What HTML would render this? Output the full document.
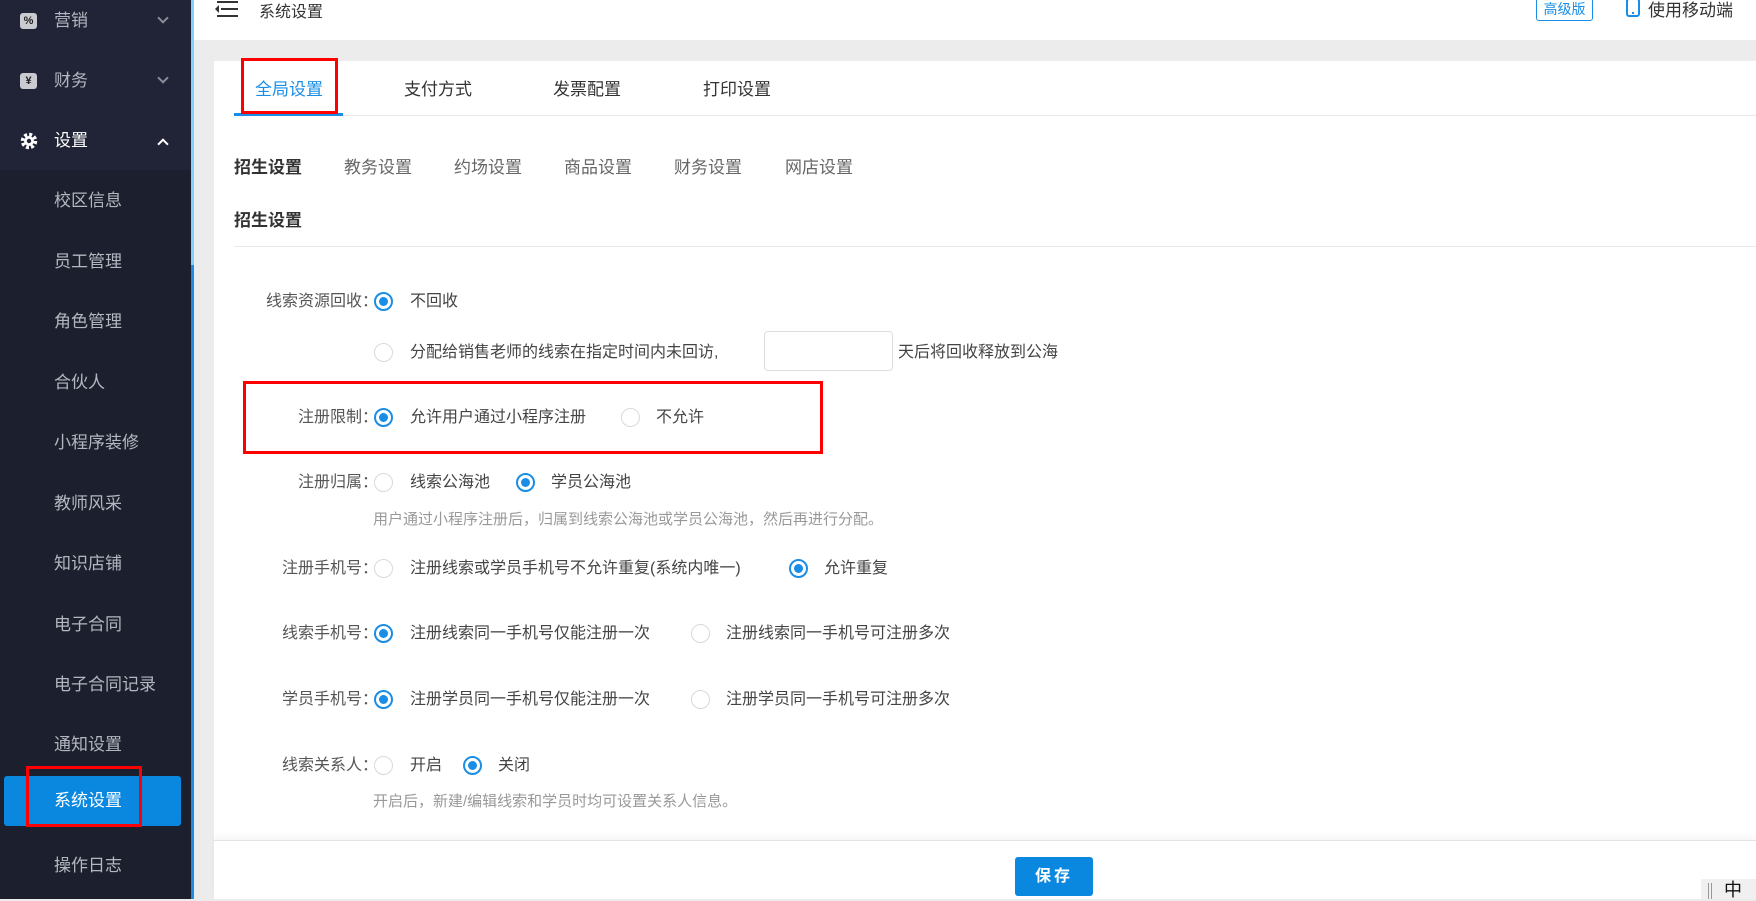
<!DOCTYPE html>
<html><head><meta charset="utf-8">
<style>
*{margin:0;padding:0;box-sizing:border-box}
body{width:1756px;height:899px;overflow:hidden;background:#ececec;font-family:"Liberation Sans","Noto Sans CJK SC",sans-serif;position:relative;color:#333}
.a{position:absolute;white-space:nowrap}
#side{position:absolute;left:0;top:0;width:191px;height:899px;background:#1c1f2d}
#side .hd{position:absolute;left:0;top:0;width:191px;height:170px;background:#212436}
.si{position:absolute;left:54px;font-size:17px;color:#b4b7c0;line-height:20px}
.ic{position:absolute;left:20px;width:17px;height:16px;background:#c9cbd1;border-radius:3px;font-size:11px;color:#222;text-align:center;line-height:16px;font-weight:bold}
.chev{position:absolute;left:159px;width:8px;height:8px;border-right:2px solid #8a8d97;border-bottom:2px solid #8a8d97}
#strip1{position:absolute;left:191px;top:0;width:3px;height:265px;background:#7fd0ff}
#strip2{position:absolute;left:191px;top:265px;width:3px;height:634px;background:#1a8ee6}
#top{position:absolute;left:194px;top:0;width:1562px;height:40px;background:#fff}
#card{position:absolute;left:214px;top:61px;width:1542px;height:779px;background:#fff}
#foot{position:absolute;left:214px;top:840px;width:1542px;height:59px;background:#fff;border-top:1px solid #e3e3e3;box-shadow:0 -4px 6px rgba(0,0,0,0.04)}
.tab{position:absolute;top:78px;font-size:17px;color:#333;line-height:24px}
.st{position:absolute;top:156px;font-size:17px;color:#666;line-height:24px}
.lb{position:absolute;font-size:16px;color:#555;line-height:22px;text-align:right;width:220px;left:158px;white-space:nowrap}
.tx{position:absolute;font-size:16px;color:#444;line-height:22px;white-space:nowrap}
.r{position:absolute;width:19px;height:19px;border:1px solid #d9d9d9;border-radius:50%;background:#fff}
.r.on{border:2px solid #1a8ee6}
.r.on::after{content:"";position:absolute;left:3px;top:3px;width:9px;height:9px;border-radius:50%;background:#1a8ee6}
.hint{position:absolute;left:373px;font-size:15px;color:#999;line-height:18px;white-space:nowrap}
.red{position:absolute;border:3px solid #f00}
</style></head><body>
<div id="side">
 <div class="hd"></div>
 <div class="ic" style="top:13px">%</div><div class="si" style="top:11px">营销</div><div class="chev" style="top:14px;transform:rotate(45deg)"></div>
 <div class="ic" style="top:73px">¥</div><div class="si" style="top:71px">财务</div><div class="chev" style="top:74px;transform:rotate(45deg)"></div>
 <svg class="a" style="left:20px;top:132px" width="18" height="18" viewBox="0 0 18 18"><circle cx="9" cy="9" r="6.5" fill="none" stroke="#fff" stroke-width="3.5" stroke-dasharray="3 2.1"/><circle cx="9" cy="9" r="5" fill="#fff"/><circle cx="9" cy="9" r="2.2" fill="#212436"/></svg>
 <div class="si" style="top:131px;color:#fff">设置</div><div class="chev" style="top:140px;transform:rotate(225deg);border-color:#fff"></div>
 <div class="si" style="top:191px">校区信息</div>
 <div class="si" style="top:252px">员工管理</div>
 <div class="si" style="top:312px">角色管理</div>
 <div class="si" style="top:373px">合伙人</div>
 <div class="si" style="top:433px">小程序装修</div>
 <div class="si" style="top:494px">教师风采</div>
 <div class="si" style="top:554px">知识店铺</div>
 <div class="si" style="top:615px">电子合同</div>
 <div class="si" style="top:675px">电子合同记录</div>
 <div class="si" style="top:735px">通知设置</div>
 <div class="a" style="left:4px;top:776px;width:177px;height:50px;background:#0a88e0;border-radius:3px"></div>
 <div class="si" style="top:791px;color:#fff">系统设置</div>
 <div class="si" style="top:856px">操作日志</div>
 <div class="red" style="left:26px;top:766px;width:116px;height:61px"></div>
</div>
<div id="strip1"></div><div id="strip2"></div>
<div id="top">
 <div class="a" style="left:23px;top:1px;width:21px;height:2px;background:#333"></div>
 <div class="a" style="left:27px;top:8px;width:17px;height:2px;background:#333"></div>
 <div class="a" style="left:23px;top:15px;width:21px;height:2px;background:#333"></div>
 <div class="a" style="left:21px;top:5px;width:0;height:0;border-top:4px solid transparent;border-bottom:4px solid transparent;border-right:4px solid #333"></div>
 <div class="a" style="left:65px;top:-2px;font-size:16px;color:#333">系统设置</div>
 <div class="a" style="left:1342px;top:-2px;width:57px;height:23px;border:1px solid #1a8ee6;border-radius:3px;font-size:14px;color:#1a8ee6;text-align:center;line-height:20px">高级版</div>
 <div class="a" style="left:1432px;top:-2px;width:14px;height:19px;border:2px solid #1a8ee6;border-radius:3px"></div>
 <div class="a" style="left:1438px;top:12px;width:2px;height:2px;background:#1a8ee6"></div>
 <div class="a" style="left:1454px;top:-4px;font-size:17px;color:#333">使用移动端</div>
</div>
<div id="card"></div>
<div class="a" style="left:234px;top:115px;width:1522px;height:1px;background:#e8e8e8"></div>
<div class="a" style="left:234px;top:113px;width:109px;height:3px;background:#1a8ee6"></div>
<div class="tab" style="left:255px;color:#1a8ee6">全局设置</div>
<div class="tab" style="left:404px">支付方式</div>
<div class="tab" style="left:553px">发票配置</div>
<div class="tab" style="left:703px">打印设置</div>
<div class="red" style="left:241px;top:58px;width:97px;height:56px"></div>
<div class="st" style="left:234px;color:#333;font-weight:bold">招生设置</div>
<div class="st" style="left:344px">教务设置</div>
<div class="st" style="left:454px">约场设置</div>
<div class="st" style="left:564px">商品设置</div>
<div class="st" style="left:674px">财务设置</div>
<div class="st" style="left:785px">网店设置</div>
<div class="a" style="left:234px;top:209px;font-size:17px;font-weight:bold;color:#333;line-height:24px">招生设置</div>
<div class="a" style="left:234px;top:246px;width:1522px;height:1px;background:#e8e8e8"></div>

<div class="lb" style="top:291px">线索资源回收：</div>
<div class="r on" style="left:374px;top:292px"></div><div class="tx" style="left:410px;top:291px">不回收</div>
<div class="r" style="left:374px;top:343px"></div><div class="tx" style="left:410px;top:342px">分配给销售老师的线索在指定时间内未回访,</div>
<div class="a" style="left:764px;top:331px;width:129px;height:40px;border:1px solid #ddd;border-radius:4px"></div>
<div class="tx" style="left:898px;top:342px">天后将回收释放到公海</div>

<div class="lb" style="top:407px">注册限制：</div>
<div class="r on" style="left:374px;top:408px"></div><div class="tx" style="left:410px;top:407px">允许用户通过小程序注册</div>
<div class="r" style="left:621px;top:408px"></div><div class="tx" style="left:656px;top:407px">不允许</div>
<div class="red" style="left:243px;top:381px;width:580px;height:73px"></div>

<div class="lb" style="top:472px">注册归属：</div>
<div class="r" style="left:374px;top:473px"></div><div class="tx" style="left:410px;top:472px">线索公海池</div>
<div class="r on" style="left:516px;top:473px"></div><div class="tx" style="left:551px;top:472px">学员公海池</div>
<div class="hint" style="top:511px">用户通过小程序注册后，归属到线索公海池或学员公海池，然后再进行分配。</div>

<div class="lb" style="top:558px">注册手机号：</div>
<div class="r" style="left:374px;top:559px"></div><div class="tx" style="left:410px;top:558px">注册线索或学员手机号不允许重复(系统内唯一)</div>
<div class="r on" style="left:789px;top:559px"></div><div class="tx" style="left:824px;top:558px">允许重复</div>

<div class="lb" style="top:623px">线索手机号：</div>
<div class="r on" style="left:374px;top:624px"></div><div class="tx" style="left:410px;top:623px">注册线索同一手机号仅能注册一次</div>
<div class="r" style="left:691px;top:624px"></div><div class="tx" style="left:726px;top:623px">注册线索同一手机号可注册多次</div>

<div class="lb" style="top:689px">学员手机号：</div>
<div class="r on" style="left:374px;top:690px"></div><div class="tx" style="left:410px;top:689px">注册学员同一手机号仅能注册一次</div>
<div class="r" style="left:691px;top:690px"></div><div class="tx" style="left:726px;top:689px">注册学员同一手机号可注册多次</div>

<div class="lb" style="top:755px">线索关系人：</div>
<div class="r" style="left:374px;top:756px"></div><div class="tx" style="left:410px;top:755px">开启</div>
<div class="r on" style="left:463px;top:756px"></div><div class="tx" style="left:498px;top:755px">关闭</div>
<div class="hint" style="top:793px">开启后，新建/编辑线索和学员时均可设置关系人信息。</div>

<div id="foot"></div>
<div class="a" style="left:1015px;top:857px;width:78px;height:39px;background:#0a88e0;border-radius:3px;color:#fff;font-size:16px;font-weight:bold;text-align:center;line-height:39px;letter-spacing:3px">保存</div>
<div class="a" style="left:1701px;top:879px;width:55px;height:20px;background:#f0f0f0"></div>
<div class="a" style="left:1708px;top:883px;width:1px;height:16px;background:#999"></div>
<div class="a" style="left:1711px;top:883px;width:1px;height:16px;background:#999"></div>
<div class="a" style="left:1724px;top:879px;font-size:18px;color:#111;line-height:22px">中</div>
</body></html>
